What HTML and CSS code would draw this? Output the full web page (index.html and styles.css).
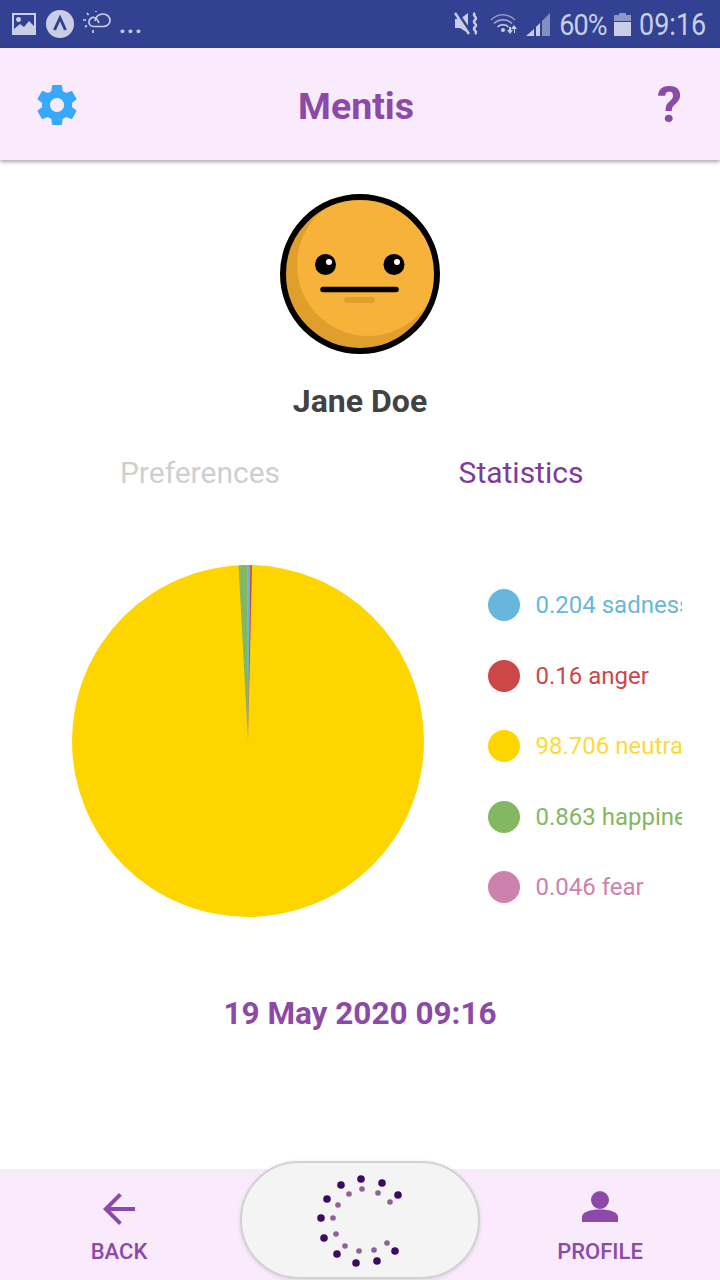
FILE: index.html
```html
<!DOCTYPE html>
<html lang="en">
<head>
<meta charset="utf-8">
<title>Mentis</title>
<link rel="stylesheet" href="styles.css">
</head>
<body>
<div class="app">
  <div class="status">
    <div class="status-left">
      <svg class="si-image" viewBox="0 0 24 22"><path class="sb" fill-rule="evenodd" d="M0 0h24v22H0zM2 2v14l6-5 4 3 5-6 5 5V2zM6.500 4a2.500 2.500 0 1 0 .01 0z"/></svg>
      <svg class="si-app" viewBox="0 0 28 28"><circle class="sb" cx="14" cy="14" r="14"/><path d="M8.500 20L14 8l5.500 12" fill="none" stroke="#334193" stroke-width="3"/></svg>
      <svg class="si-cloud" viewBox="0 0 28 24"><g fill="none" stroke="#c9cee6" stroke-width="1.700"><path d="M12 10c1-5 4-7 8-7 4 0 7 3 7 6.500s-3 6-7 6H10"/><path d="M10 15.500a4.500 4.500 0 1 1 1-9c3 .5 4 3 5 5.500"/><path d="M4 2l1.500 2M0 9h3M2 16l2-1.500M10 22v-3M13 0v1"/></g></svg>
      <span class="dots">...</span>
    </div>
    <div class="status-right">
      <svg class="si-mute" viewBox="0 0 26 24"><path class="sb" d="M1 7h5l8-6v20l-8-5H1z"/><path d="M2 0l15 22" stroke="#334193" stroke-width="4.500"/><path d="M1 1l14 21" stroke="#c9cee6" stroke-width="2.500"/><path d="M21 1c-3.500 3 3.500 4 0 7s3.500 4 0 7 3.500 4 0 7" fill="none" stroke="#c9cee6" stroke-width="2.500"/></svg>
      <svg class="si-wifi" viewBox="0 0 28 24"><g fill="none" stroke="#c9cee6"><path d="M1 8c7-7 17-7 24 0" stroke-width="1.500" opacity=".6"/><path d="M4 11.500c5-5 13-5 18 0" stroke-width="1.500" opacity=".8"/><path d="M7.500 15c3-3 8-3 11 0" stroke-width="1.500"/></g><circle class="sb" cx="13" cy="18" r="2"/><path class="sb" d="M17 18h2v-3h2v3h2l-3 4zM24 17l-3 0 3-4 3 4h-2v4h-1z"/></svg>
      <svg class="si-signal" viewBox="0 0 24 24"><path class="sb" d="M0 24l8-7v7zM10 24v-9l4-4v13z"/><path class="sb" opacity=".55" d="M16 24V9l8-8v23z"/></svg>
      <span class="stime pct">60%</span>
      <svg class="si-batt" viewBox="0 0 17 23"><path class="sb" opacity=".6" d="M5 0h7v2h5v6H0V2h5z"/><path class="sb" d="M0 9h17v14H0z"/></svg>
      <span class="stime clock">09:16</span>
    </div>
  </div>

  <header class="top">
    <svg class="gear" viewBox="0 0 24 24"><path d="M19.430 12.980c.04-.32.07-.64.07-.98s-.03-.66-.07-.98l2.110-1.650c.19-.15.24-.42.12-.64l-2-3.460c-.12-.22-.39-.3-.61-.22l-2.490 1c-.52-.4-1.080-.73-1.690-.98l-.38-2.650C14.460 2.180 14.250 2 14 2h-4c-.25 0-.46.18-.49.42l-.38 2.650c-.61.25-1.170.59-1.690.98l-2.490-1c-.23-.09-.49 0-.61.22l-2 3.460c-.13.22-.07.49.12.64l2.110 1.650c-.04.32-.07.65-.07.98s.03.66.07.98l-2.110 1.650c-.19.15-.24.42-.12.64l2 3.460c.12.22.39.3.61.22l2.490-1c.52.4 1.080.73 1.690.98l.38 2.650c.03.24.24.42.49.42h4c.25 0 .46-.18.49-.42l.38-2.650c.61-.25 1.170-.59 1.690-.98l2.490 1c.23.09.49 0 .61-.22l2-3.460c.12-.22.07-.49-.12-.64l-2.110-1.650zM12 15.500c-1.930 0-3.500-1.570-3.500-3.500s1.570-3.500 3.500-3.500 3.500 1.570 3.500 3.500-1.570 3.500-3.500 3.500z"/></svg>
    <h1 class="title">Mentis</h1>
    <span class="help">?</span>
  </header>

  <main class="main">
    <svg class="avatar" viewBox="0 0 160 160">
      <defs><clipPath id="face"><circle cx="80" cy="80" r="77"/></clipPath></defs>
      <circle cx="80" cy="80" r="77" fill="#e09f2c"/>
      <circle cx="88" cy="71" r="71" fill="#f7b239" clip-path="url(#face)"/>
      <circle cx="80" cy="80" r="77" fill="none" stroke="#000" stroke-width="6"/>
      <circle cx="45.500" cy="70.500" r="10.500"/>
      <circle cx="114" cy="70.500" r="10.500"/>
      <circle cx="49" cy="68" r="3" fill="#fff"/>
      <circle cx="117" cy="68" r="3" fill="#fff"/>
      <path d="M43 95.500h73" stroke="#000" stroke-width="5.500" stroke-linecap="round"/>
      <path d="M67 106h25" stroke="#e09f2c" stroke-width="6" stroke-linecap="round"/>
    </svg>
    <div class="name">Jane Doe</div>
    <div class="tabs">
      <div class="tab">Preferences</div>
      <div class="tab tab-active">Statistics</div>
    </div>
    <div class="stats">
      <svg class="pie" viewBox="0 0 352 352">
        <circle cx="176" cy="176" r="176" fill="#ffd500"/>
        <path d="M176 176L176 0A176 176 0 0 1 178.240 .01Z" fill="#67b7dc"/>
        <path d="M176 176L178.240 .01A176 176 0 0 1 180.030 .05Z" fill="#cc4748"/>
        <path d="M176 176L166.500 .26A176 176 0 0 1 175.500 0Z" fill="#84b761"/>
        <path d="M176 176L175.500 0A176 176 0 0 1 176 0Z" fill="#cd82ad"/>
      </svg>
      <ul class="legend">
        <li class="leg leg-sad"><span class="swatch"></span><span class="leg-text">0.204 sadness</span></li>
        <li class="leg leg-ang"><span class="swatch"></span><span class="leg-text">0.16 anger</span></li>
        <li class="leg leg-neu"><span class="swatch"></span><span class="leg-text">98.706 neutral</span></li>
        <li class="leg leg-hap"><span class="swatch"></span><span class="leg-text">0.863 happiness</span></li>
        <li class="leg leg-fear"><span class="swatch"></span><span class="leg-text">0.046 fear</span></li>
      </ul>
    </div>
    <div class="date">19 May 2020 09:16</div>
  </main>

  <nav class="bottom">
    <div class="nav-item nav-back">
      <svg class="nav-icon" viewBox="0 0 24 24"><path d="M20 11H7.830l5.590-5.590L12 4l-8 8 8 8 1.410-1.410L7.830 13H20v-2z"/></svg>
      <span class="nav-label">BACK</span>
    </div>
    <div class="pill">
      <svg class="spinner" viewBox="0 0 100 100">
        <g fill="#3c0a5e">
          <circle cx="45" cy="5" r="3.800"/><circle cx="66" cy="9" r="3.800"/><circle cx="82" cy="21" r="3.800"/><circle cx="25" cy="11" r="3.800"/><circle cx="11" cy="25" r="3.800"/><circle cx="5" cy="44" r="3.800"/><circle cx="8" cy="64" r="3.800"/><circle cx="21" cy="80" r="3.800"/><circle cx="40" cy="89" r="3.800"/><circle cx="61" cy="87" r="3.800"/><circle cx="79" cy="77" r="3.800"/>
        </g>
        <g fill="#8f5f95">
          <circle cx="46" cy="15" r="2.800"/><circle cx="62" cy="19" r="2.800"/><circle cx="74" cy="28" r="2.800"/><circle cx="33" cy="20" r="2.800"/><circle cx="22" cy="31" r="2.800"/><circle cx="17" cy="44" r="2.800"/><circle cx="20" cy="60" r="2.800"/><circle cx="29" cy="72" r="2.800"/><circle cx="43" cy="77" r="2.800"/><circle cx="58" cy="76" r="2.800"/><circle cx="71" cy="69" r="2.800"/>
        </g>
      </svg>
    </div>
    <div class="nav-item">
      <svg class="nav-icon" viewBox="0 0 48 48"><circle cx="24" cy="15" r="9"/><path d="M6 37v-5c0-5 8-7.500 18-7.500S42 27 42 32v5z"/></svg>
      <span class="nav-label">PROFILE</span>
    </div>
  </nav>
</div>
</body>
</html>
```

FILE: styles.css
```css
* { box-sizing: border-box; }
html, body { margin: 0; padding: 0; }
body { font-family: Roboto, "Liberation Sans", sans-serif; background: #fff; }
.app { width: 720px; height: 1280px; display: flex; flex-direction: column; overflow: hidden; }

.status { height: 48px; background: #334193; display: flex; justify-content: space-between; align-items: center; padding: 0 14px 0 12px; flex: none; }
.status-left, .status-right { display: flex; align-items: center; }
.sb { fill: #c9cee6; }
.si-image { width: 24px; height: 22px; }
.si-app { width: 28px; height: 28px; margin-left: 10px; }
.si-cloud { width: 28px; height: 24px; margin-left: 9px; margin-top: -2px; }
.dots { color: #c9cee6; font-size: 24px; font-weight: 700; letter-spacing: 1px; margin-left: 8px; margin-top: 2px; }
.si-mute { width: 26px; height: 24px; }
.si-wifi { width: 28px; height: 24px; margin-left: 10px; }
.si-signal { width: 24px; height: 24px; margin-left: 8px; }
.si-batt { width: 17px; height: 23px; margin-left: 7px; }
.stime { color: #c9cee6; font-size: 30px; letter-spacing: -1px; transform: scaleX(.9); transform-origin: right center; }
.pct { margin-left: 4px; }
.clock { margin-left: -2px; font-size: 31px; letter-spacing: 0; transform: scaleX(.87); }

.top { height: 112px; background: #f9ebfc; display: flex; justify-content: space-between; align-items: center; padding: 2px 38px 0 33px; box-shadow: 0 2px 4px rgba(0,0,0,.35); flex: none; position: relative; }
.gear { width: 48px; height: 48px; fill: #36a9ff; }
.title { margin: 4px 26px 0 0; font-size: 37.500px; font-weight: 700; color: #8b4aa8; line-height: 1; }
.help { font-size: 50px; font-weight: 700; color: #8b4aa8; line-height: 1; }

.main { flex: 1; display: flex; flex-direction: column; align-items: center; padding-top: 34px; min-height: 0; }
.avatar { width: 160px; height: 160px; flex: none; }
.name { font-size: 32px; font-weight: 700; color: #424242; margin-top: 29px; line-height: 36px; }
.tabs { width: 100%; display: grid; grid-template-columns: 1fr 1fr; padding: 0 40px; margin-top: 36px; }
.tab { font-size: 30px; line-height: 36px; text-align: center; color: #cfcfcf; }
.tab-active { color: #7d3c98; padding-left: 2px; }
.stats { width: 100%; display: flex; align-items: flex-start; margin-top: 74px; padding-left: 72px; }
.pie { width: 352px; height: 352px; flex: none; }
.legend { list-style: none; margin: 24px 0 0 64px; padding: 0; width: 194px; display: flex; flex-direction: column; gap: 38.500px; overflow: hidden; }
.leg { display: flex; align-items: center; height: 32px; }
.swatch { width: 32px; height: 32px; border-radius: 50%; flex: none; }
.leg-text { font-size: 24px; margin-left: 15.500px; white-space: nowrap; }
.leg-sad { color: #67b7dc; } .leg-sad .swatch { background: #67b7dc; }
.leg-ang { color: #cc4748; } .leg-ang .swatch { background: #cc4748; }
.leg-neu { color: #ffd83a; } .leg-neu .swatch { background: #ffd500; }
.leg-hap { color: #84b761; } .leg-hap .swatch { background: #84b761; }
.leg-fear { color: #cd82ad; } .leg-fear .swatch { background: #cd82ad; }
.date { font-size: 31.500px; font-weight: 700; color: #8b4aa8; margin-top: 79px; line-height: 36px; }

.bottom { height: 111px; background: #f9ebfc; display: grid; grid-template-columns: 240px 240px 240px; flex: none; }
.nav-item { display: flex; flex-direction: column; align-items: center; padding-top: 16px; }
.nav-back { padding-right: 2px; }
.nav-icon { width: 48px; height: 48px; fill: #8b4aa8; }
.nav-label { font-size: 22px; font-weight: 500; color: #8b4aa8; line-height: 28px; margin-top: 5px; }
.pill { height: 118px; margin-top: -8px; border: 2.500px solid #d2d2d2; border-radius: 59px; background: #f4f4f4; display: flex; align-items: center; justify-content: center; box-shadow: 0 1px 4px rgba(0,0,0,.12); }
.spinner { width: 100px; height: 100px; margin-top: 8px; margin-left: 11px; }
```
